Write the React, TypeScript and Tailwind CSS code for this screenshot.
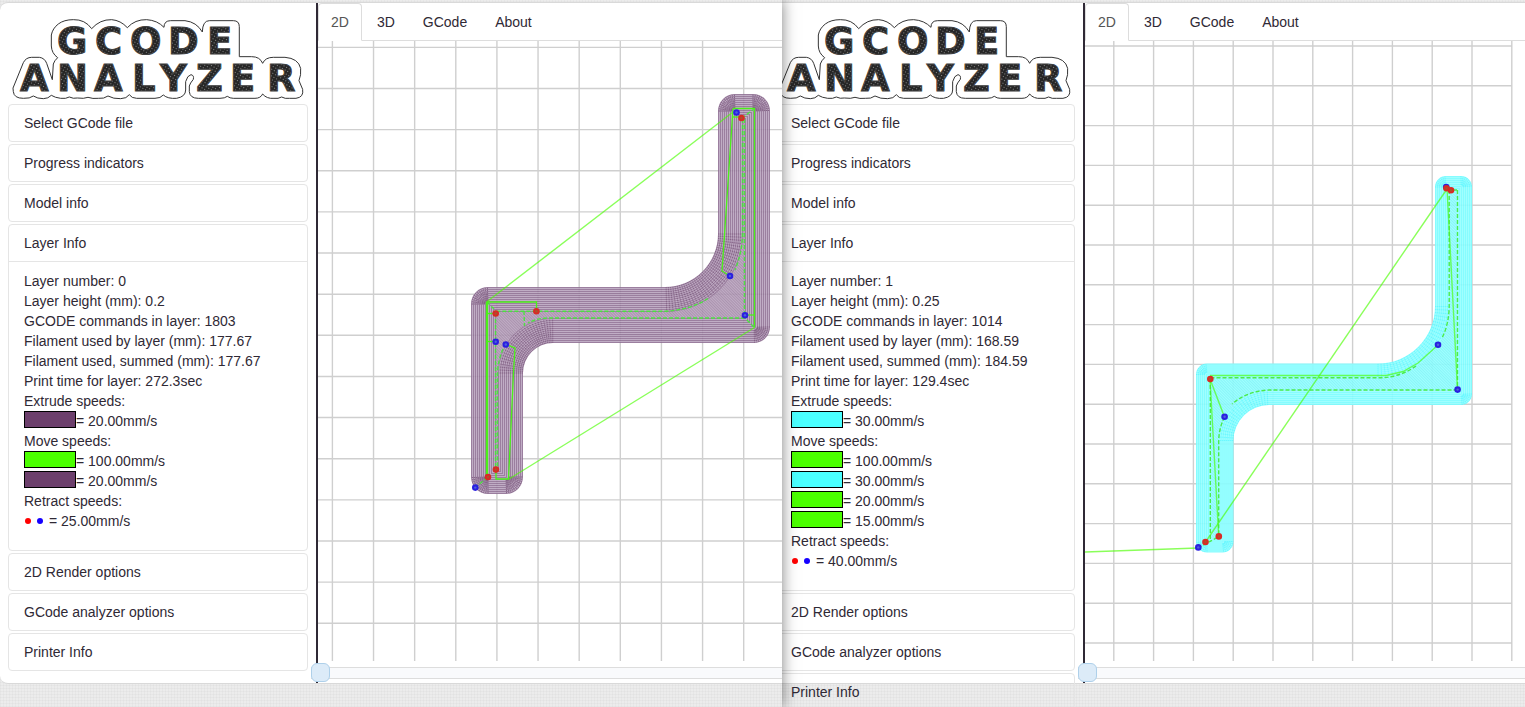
import { useId } from "react";
import clsx from "clsx";

type Point = [number, number];

interface Speed {
  color: string;
  value: string;
}

interface Spokes {
  cx: number;
  cy: number;
  r0: number;
  r1: number;
  from: number; // degrees
  to: number;
  step: number;
}

interface Grid {
  x: number;
  y: number;
  step: number;
  maxX: number;
}

interface Plot {
  origin: Point;
  grid: Grid;
  outline: string;
  band: number; // thickness of the perimeter walls
  wall: string;
  gap: string;
  infill: string;
  spoke: string;
  opacity: number;
  spokes: Spokes[];
  travels: string[];
  moves: string[];
  dashed: string[];
  restarts: Point[];
  retracts: Point[];
}

interface Layer {
  name: string;
  info: string[];
  extrude: Speed[];
  move: Speed[];
  retract: string;
  plot: Plot;
}

const before: Layer = {
  name: "before",
  info: [
    "Layer number: 0",
    "Layer height (mm): 0.2",
    "GCODE commands in layer: 1803",
    "Filament used by layer (mm): 177.67",
    "Filament used, summed (mm): 177.67",
    "Print time for layer: 272.3sec",
  ],
  extrude: [{ color: "bg-[#6c3f6c]", value: "20.00mm/s" }],
  move: [
    { color: "bg-[#4bff00]", value: "100.00mm/s" },
    { color: "bg-[#6c3f6c]", value: "20.00mm/s" },
  ],
  retract: "25.00mm/s",
  plot: {
    origin: [318, 41],
    grid: { x: 332.4, y: 47.4, step: 41.13, maxX: 2000 },
    outline:
      "M488 287H665A53 53 0 0 0 718 234V111A17 17 0 0 1 735 94H753A17 17 0 0 1 770 111V327A16 16 0 0 1 754 343H553A30 30 0 0 0 523 373V477A17 17 0 0 1 506 494H488A17 17 0 0 1 471 477V304A17 17 0 0 1 488 287Z",
    band: 25,
    wall: "#8e6e92",
    gap: "#b8a2bd",
    infill: "#9f85a4",
    spoke: "#755078",
    opacity: 0.88,
    spokes: [
      { cx: 665, cy: 234, r0: 53, r1: 77, from: 0, to: 90, step: 2.4 },
      { cx: 553, cy: 373, r0: 30, r1: 54, from: 180, to: 270, step: 3.2 },
      { cx: 488, cy: 304, r0: 3, r1: 17, from: 180, to: 270, step: 8 },
      { cx: 735, cy: 111, r0: 3, r1: 17, from: 180, to: 270, step: 8 },
      { cx: 753, cy: 111, r0: 3, r1: 17, from: 270, to: 360, step: 8 },
      { cx: 754, cy: 327, r0: 3, r1: 16, from: 0, to: 90, step: 8 },
      { cx: 506, cy: 477, r0: 3, r1: 17, from: 0, to: 90, step: 8 },
      { cx: 488, cy: 477, r0: 3, r1: 17, from: 90, to: 180, step: 8 },
    ],
    travels: ["M486.5 302L733 112", "M509 479L754.5 327.5"],
    moves: [
      "M733 108.5H754.5V327.5",
      "M733 108.5L724.5 235L722 271L730 276",
      "M732 117H741",
      "M745 315H754",
      "M486.5 302V478",
      "M487.5 302V478",
      "M486.5 302H536.5V311",
      "M486.5 313.5H496",
      "M486.5 341.5H496",
      "M506 344.5L515 348L513.5 373L508.5 479H496V470",
    ],
    dashed: [
      "M742.5 119V235Q742 253 735 270",
      "M744.5 119V318",
      "M708 298.5Q690 310 665 311.3H496",
      "M745 318H549Q537 318 528 323",
      "M503 349Q498 360 497.5 373V470",
      "M495.5 313V470",
      "M754 327L745 318",
      "M487 302L496 311",
      "M742 118L754 109",
      "M524 311L524.5 326",
      "M475 487.5L488 477",
    ],
    restarts: [
      [741.5, 118],
      [495.7, 313.5],
      [536.4, 311.3],
      [495.9, 469.6],
      [488, 477],
    ],
    retracts: [
      [736.5, 112.5],
      [730, 276],
      [745, 315.3],
      [495.7, 341.7],
      [505.8, 344.5],
      [475.3, 487.6],
    ],
  },
};

const after: Layer = {
  name: "after",
  info: [
    "Layer number: 1",
    "Layer height (mm): 0.25",
    "GCODE commands in layer: 1014",
    "Filament used by layer (mm): 168.59",
    "Filament used, summed (mm): 184.59",
    "Print time for layer: 129.4sec",
  ],
  extrude: [{ color: "bg-[#4bffff]", value: "30.00mm/s" }],
  move: [
    { color: "bg-[#4bff00]", value: "100.00mm/s" },
    { color: "bg-[#4bffff]", value: "30.00mm/s" },
    { color: "bg-[#4bff00]", value: "20.00mm/s" },
    { color: "bg-[#4bff00]", value: "15.00mm/s" },
  ],
  retract: "40.00mm/s",
  plot: {
    origin: [1085, 41],
    grid: { x: 1113.8, y: 46, step: 39.8, maxX: 1512.5 },
    outline:
      "M1207 363.5H1378A57 57 0 0 0 1435 306.5V187A11 11 0 0 1 1446 176H1461A11 11 0 0 1 1472 187V394A11 11 0 0 1 1461 405H1269A35.5 35.5 0 0 0 1233.5 440.5V541.5A11 11 0 0 1 1222.5 552.5H1207A11 11 0 0 1 1196 541.5V374.5A11 11 0 0 1 1207 363.5Z",
    band: 14,
    wall: "#7cfcff",
    gap: "#98ffff",
    infill: "#7ff5f8",
    spoke: "#5cf8ff",
    opacity: 0.92,
    spokes: [
      { cx: 1378, cy: 306.5, r0: 57, r1: 71, from: 0, to: 90, step: 3 },
      { cx: 1269, cy: 440.5, r0: 35.5, r1: 50, from: 180, to: 270, step: 4 },
      { cx: 1207, cy: 374.5, r0: 2, r1: 11, from: 180, to: 270, step: 12 },
      { cx: 1446, cy: 187, r0: 2, r1: 11, from: 180, to: 270, step: 12 },
      { cx: 1461, cy: 187, r0: 2, r1: 11, from: 270, to: 360, step: 12 },
      { cx: 1461, cy: 394, r0: 2, r1: 11, from: 0, to: 90, step: 12 },
      { cx: 1222.5, cy: 541.5, r0: 2, r1: 11, from: 0, to: 90, step: 12 },
      { cx: 1207, cy: 541.5, r0: 2, r1: 11, from: 90, to: 180, step: 12 },
    ],
    travels: [
      "M1085 552L1198 548",
      "M1205.5 542L1447 189",
      "M1210 379L1218.7 536",
      "M1210 379L1224.5 417",
      "M1447 188L1457.5 389",
      "M1210 375.5H1386L1403 371.5L1418 363L1438 345",
    ],
    moves: [],
    dashed: [
      "M1210.5 377.7H1384Q1402 376 1416 366",
      "M1210.3 379V541",
      "M1457.5 390H1269Q1247 391 1232 404",
      "M1224.5 417Q1219 428 1218.7 441V536",
      "M1449.2 190V306Q1449 324 1442 338",
      "M1457.5 190V389",
      "M1447 190H1458",
      "M1198 548L1218 537",
    ],
    restarts: [
      [1210.3, 379],
      [1205.5, 542],
      [1218.8, 536.4],
      [1446.5, 188.3],
      [1451, 190.3],
    ],
    retracts: [
      [1438, 344.8],
      [1457.6, 389.6],
      [1224.6, 416.8],
      [1198.3, 547.4],
      [1446.2, 187],
    ],
  },
};

const spokePath = ({ cx, cy, r0, r1, from, to, step }: Spokes) => {
  let d = "";
  for (let a = from; a <= to; a += step) {
    const c = Math.cos((a * Math.PI) / 180);
    const s = Math.sin((a * Math.PI) / 180);
    d += `M${cx + r0 * c} ${cy + r0 * s}L${cx + r1 * c} ${cy + r1 * s}`;
  }
  return d;
};

const gridPath = ({ x, y, step, maxX }: Grid, left: number) => {
  let d = "";
  for (let i = 0; i < 50; i++) {
    const gx = x + i * step;
    if (gx < maxX) d += `M${gx} 0V3000`;
    d += `M${left} ${y + i * step}H${maxX}`;
  }
  return d;
};

const LayerPlot = ({ plot }: { plot: Plot }) => {
  const id = useId();
  // widest stroke first, every narrower one covers the middle of it
  const walls: number[] = [];
  for (let w = plot.band; w > 0; w--) walls.push(w);

  return (
    <svg
      className="block min-h-0 w-full flex-1"
      role="img"
      aria-label="Layer preview"
    >
      <defs>
        <clipPath id={`${id}clip`}>
          <path d={plot.outline} />
        </clipPath>
        <pattern
          id={`${id}infill`}
          width="2"
          height="2"
          patternUnits="userSpaceOnUse"
          patternTransform="rotate(-45)"
        >
          <rect width="2" height="2" fill={plot.gap} />
          <rect width="1" height="2" fill={plot.infill} />
        </pattern>
      </defs>
      <g
        transform={`translate(${-plot.origin[0]} ${-plot.origin[1]})`}
        fill="none"
      >
        <path
          d={gridPath(plot.grid, plot.origin[0])}
          stroke="#cfcfcf"
          strokeWidth="1.4"
        />
        <g clipPath={`url(#${id}clip)`} opacity={plot.opacity}>
          <path d={plot.outline} fill={`url(#${id}infill)`} />
          {walls.map((w) => (
            <path
              key={w}
              d={plot.outline}
              stroke={w % 2 ? plot.wall : plot.gap}
              strokeWidth={w * 2}
            />
          ))}
          {plot.spokes.map((s, i) => (
            <path
              key={i}
              d={spokePath(s)}
              stroke={plot.spoke}
              strokeWidth="1"
              strokeDasharray="1.4 .6"
            />
          ))}
        </g>
        {plot.travels.map((d) => (
          <path key={d} d={d} stroke="#4bff00" strokeWidth="1.4" opacity=".65" />
        ))}
        {plot.dashed.map((d) => (
          <path
            key={d}
            d={d}
            stroke="#42ea36"
            strokeWidth="1.4"
            strokeDasharray="4 2"
            opacity=".9"
          />
        ))}
        {plot.moves.map((d) => (
          <path key={d} d={d} stroke="#4bf01a" strokeWidth="1.3" />
        ))}
        {plot.retracts.map(([x, y]) => (
          <g key={`${x} ${y}`}>
            <circle cx={x} cy={y} r="3.3" fill="#2a1fe0" />
            <circle cx={x} cy={y} r="1.2" fill="#4a63d8" />
          </g>
        ))}
        {plot.restarts.map(([x, y]) => (
          <g key={`${x} ${y}`}>
            <circle cx={x} cy={y} r="3.3" fill="#d92a24" />
            <circle cx={x} cy={y} r="1.2" fill="#a8542c" />
          </g>
        ))}
      </g>
    </svg>
  );
};

const Logo = () => {
  const id = useId();

  return (
    <svg className="h-[101px] w-[300px]" viewBox="0 0 300 101">
      <defs>
        <pattern
          id={id}
          width="3"
          height="3"
          patternUnits="userSpaceOnUse"
          patternTransform="rotate(30)"
        >
          <rect width="3" height="3" fill="#262626" />
          <rect width="1" height="1" fill="#8a8a8a" />
        </pattern>
      </defs>
      {/* brim around the two words */}
      <path
        transform="translate(-8 -3) scale(.3333)"
        fill="#fff"
        stroke="#333"
        strokeWidth="3"
        strokeLinejoin="round"
        d="M40 275Q36 265 44 252L70 188Q78 172 95 172H118Q134 174 140 190L157 239L160 192Q163 182 173 173Q155 160 154 138V105Q158 85 175 72Q192 59 220 59Q255 58 275 86Q300 58 335 59Q362 61 382 83Q405 58 440 59Q472 61 492 82Q492 62 512 62H555Q590 66 607 96Q608 62 628 62H700Q718 62 718 80V170H755Q780 170 788 190Q796 172 820 172H855Q895 175 902 205Q904 225 897 242L908 268Q912 292 888 295H868Q855 297 845 291Q835 297 822 295Q800 297 788 282Q782 295 765 295H700Q690 295 682 289Q675 295 660 295H595Q570 295 568 275V258Q570 250 580 238Q583 226 573 224Q562 226 557 245V270Q557 290 530 295Q503 297 490 285Q482 295 465 295H410Q395 295 388 284Q380 296 362 296Q340 297 324 288Q312 297 295 295Q278 297 264 292Q252 297 232 294Q220 297 208 291Q198 297 182 295Q165 293 154 286Q145 296 130 296Q112 296 100 288Q90 296 70 295Q42 295 40 275Z"
      />
      <g
        fill={`url(#${id})`}
        stroke="#404040"
        strokeWidth="1"
        fontFamily="'DejaVu Sans', sans-serif"
        fontWeight="700"
        fontSize="37"
      >
        <text x="49 87 122 160 199" y="51">
          GCODE
        </text>
        <text x="12 49 86 124 152 188 222 259" y="88">
          ANALYZER
        </text>
      </g>
    </svg>
  );
};

const SpeedRow = ({ speed }: { speed: Speed }) => (
  <div className="flex h-5">
    <span className={clsx("h-[17px] w-[52px] border border-black", speed.color)} />
    <span>= {speed.value}</span>
  </div>
);

const Section = ({
  title,
  children,
}: {
  title: string;
  children?: React.ReactNode;
}) => (
  <section className="mb-0.5 rounded border border-[#e5e5e5]">
    <button
      type="button"
      aria-expanded={Boolean(children)}
      className="block w-full px-[15px] py-2 text-left"
    >
      {title}
    </button>
    {children && (
      <div className="border-t border-[#e5e5e5] px-[15px] pt-[9px] pb-[19px]">
        {children}
      </div>
    )}
  </section>
);

const Sidebar = ({ layer }: { layer: Layer }) => (
  <aside className="w-[318px] shrink-0 border-r-2 border-[#2f2935] px-2">
    <Logo />
    <Section title="Select GCode file" />
    <Section title="Progress indicators" />
    <Section title="Model info" />
    <Section title="Layer Info">
      {layer.info.map((line) => (
        <div key={line}>{line}</div>
      ))}
      <div>Extrude speeds:</div>
      {layer.extrude.map((s) => (
        <SpeedRow key={s.value} speed={s} />
      ))}
      <div>Move speeds:</div>
      {layer.move.map((s) => (
        <SpeedRow key={s.value} speed={s} />
      ))}
      <div>Retract speeds:</div>
      <div className="flex items-center gap-1.5 pl-px">
        <span className="size-1.5 rounded-full bg-[#ff0000]" />
        <span className="size-1.5 rounded-full bg-[#1500ff]" />
        <span>= {layer.retract}</span>
      </div>
    </Section>
    <Section title="2D Render options" />
    <Section title="GCode analyzer options" />
    <Section title="Printer Info" />
  </aside>
);

const tabs = ["2D", "3D", "GCode", "About"];

const Analyzer = ({ layer }: { layer: Layer }) => (
  <div className="flex h-full rounded-l-lg border-y border-[#d9d9d9] bg-white">
    <Sidebar layer={layer} />
    <main className="flex min-w-0 flex-1 flex-col">
      <nav className="flex gap-0.5 border-b border-[#ddd]">
        {tabs.map((tab, i) => (
          <a
            key={tab}
            href="#"
            className={clsx(
              "-mb-px rounded-t border px-3 py-2",
              i === 0
                ? "border-[#ddd] border-b-white bg-white text-[#555]"
                : "border-transparent"
            )}
          >
            {tab}
          </a>
        ))}
      </nav>
      <LayerPlot plot={layer.plot} />
      <div className="flex h-[22px] shrink-0 items-start pt-0.5">
        <input
          type="range"
          min={0}
          max={100}
          defaultValue={0}
          aria-label={`Layer slider, ${layer.name}`}
          className="relative z-10 -ml-[7px] h-[19px] flex-1 appearance-none bg-transparent [&::-webkit-slider-runnable-track]:h-3 [&::-webkit-slider-runnable-track]:border-y [&::-webkit-slider-runnable-track]:border-[#ddd] [&::-webkit-slider-runnable-track]:bg-[#f9fafc] [&::-webkit-slider-thumb]:-mt-[5px] [&::-webkit-slider-thumb]:size-[19px] [&::-webkit-slider-thumb]:appearance-none [&::-webkit-slider-thumb]:rounded-md [&::-webkit-slider-thumb]:border [&::-webkit-slider-thumb]:border-[#aed0ea] [&::-webkit-slider-thumb]:bg-[#dcebf8]"
        />
      </div>
    </main>
  </div>
);

const weave =
  "bg-[#ececec] bg-[repeating-linear-gradient(0deg,rgba(0,0,0,0.025)_0_1px,transparent_1px_3px),repeating-linear-gradient(90deg,rgba(0,0,0,0.025)_0_1px,transparent_1px_3px)]";

const App = () => (
  <div className="grid h-screen grid-cols-[782fr_743fr] overflow-hidden font-['Liberation_Sans',Arial,sans-serif] text-sm/5 text-[#2f2935]">
    <div
      className={clsx(
        "relative z-20 h-screen min-w-0 overflow-hidden pt-0.5 pb-[23px] shadow-[0_0_14px_rgba(0,0,0,0.5)]",
        weave
      )}
    >
      <Analyzer layer={before} />
    </div>
    <div className={clsx("h-screen min-w-0 overflow-hidden pt-0.5 pb-[23px]", weave)}>
      {/* the second window is partly hidden behind the first one */}
      <div className="-ml-[15px] h-full">
        <Analyzer layer={after} />
      </div>
    </div>
  </div>
);

export default App;
